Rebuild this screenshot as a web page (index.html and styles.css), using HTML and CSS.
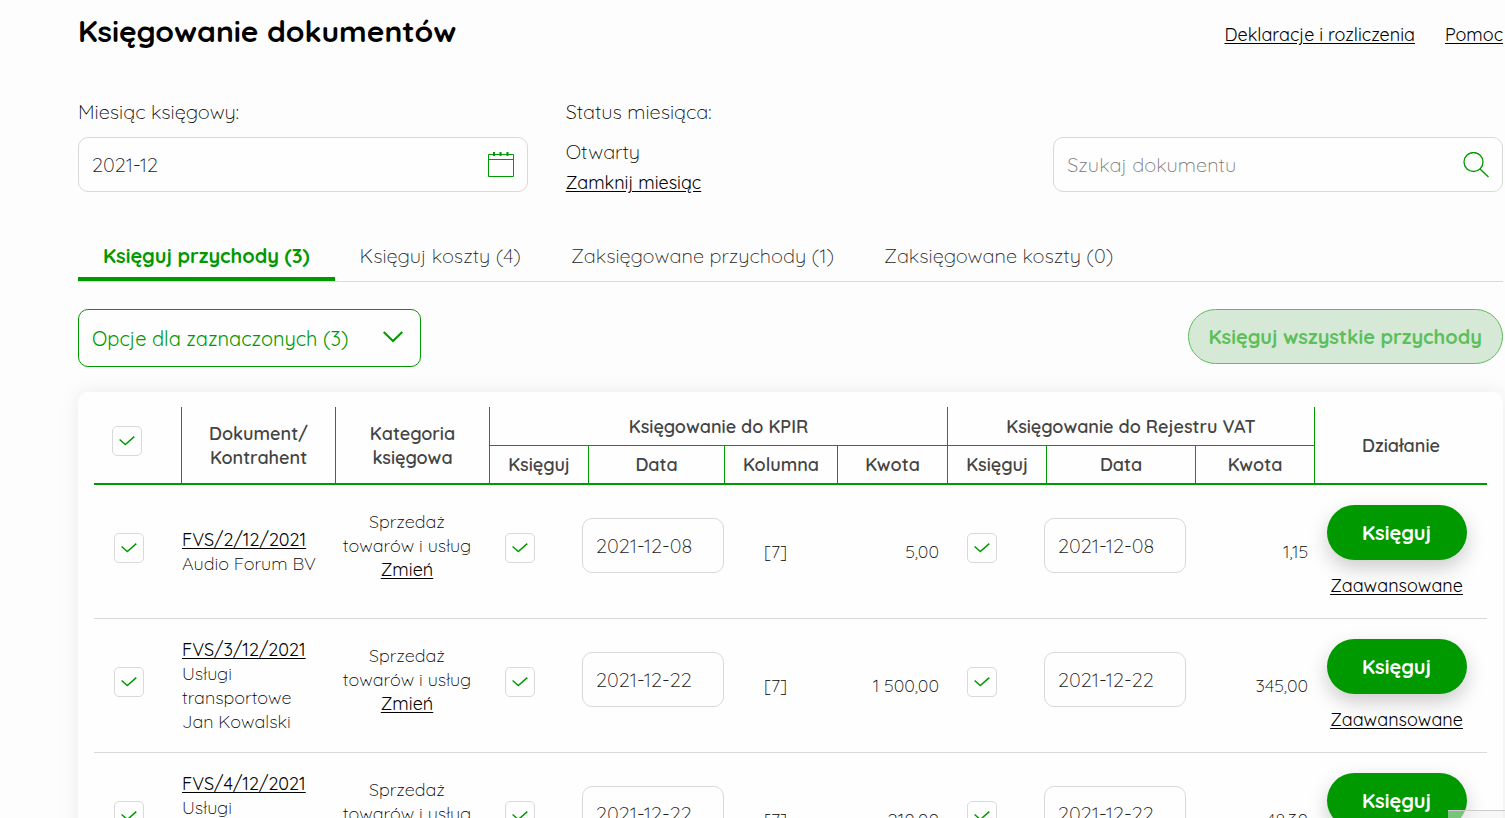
FILE: index.html
```html
<!DOCTYPE html>
<html lang="pl">
<head>
    <meta charset="UTF-8">
    <meta name="viewport" content="width=device-width, initial-scale=1.0">
    <title>Księgowanie dokumentów</title>
    <link rel="stylesheet" href="styles.css">
</head>
<body>
    <main class="page">
        <header class="page-header">
            <h1>Księgowanie dokumentów</h1>
            <nav class="top-links">
                <a href="#">Deklaracje i rozliczenia</a>
                <a href="#">Pomoc</a>
            </nav>
        </header>

        <section class="filters">
            <div class="filter">
                <label for="month">Miesiąc księgowy:</label>
                <div class="field">
                    <input type="text" id="month" name="month" value="2021-12">
                    <svg class="field-icon" viewBox="0 0 26 26" width="26" height="26" fill="none" stroke="#090">
                        <path d="M.5 2.5h25v22H.5zM.5 7.5h25"/>
                        <path d="M6 0v4M12.500 0v4M19.500 0v4" stroke-width="2"/>
                    </svg>
                </div>
            </div>
            <div class="filter">
                <span>Status miesiąca:</span>
                <div class="status">
                    <span>Otwarty</span>
                    <a href="#">Zamknij miesiąc</a>
                </div>
            </div>
            <div class="filter filter-search">
                <div class="field">
                    <input type="text" name="search" placeholder="Szukaj dokumentu" aria-label="Szukaj dokumentu">
                    <svg class="field-icon" viewBox="0 0 26 26" width="26" height="26" fill="none" stroke="#090">
                        <circle cx="10.500" cy="10" r="9.500" stroke-width="1.300"/>
                        <path d="M17 17l8.500 8" stroke-width="1.300"/>
                    </svg>
                </div>
            </div>
        </section>

        <nav class="tabs">
            <a href="#" class="tab active">Księguj przychody (3)</a>
            <a href="#" class="tab">Księguj koszty (4)</a>
            <a href="#" class="tab">Zaksięgowane przychody (1)</a>
            <a href="#" class="tab">Zaksięgowane koszty (0)</a>
        </nav>

        <div class="actions">
            <div class="select-box">
                <select name="options" aria-label="Opcje dla zaznaczonych">
                    <option>Opcje dla zaznaczonych (3)</option>
                </select>
                <svg class="select-arrow" viewBox="0 0 20 12" width="20" height="12" fill="none" stroke="#090" stroke-width="2">
                    <path d="M.7 1l9.300 9 9.300-9"/>
                </svg>
            </div>
            <button class="book-all" disabled>Księguj wszystkie przychody</button>
        </div>

        <div class="card">
            <table class="documents">
                <colgroup>
                    <col class="col-check">
                    <col class="col-document">
                    <col class="col-category">
                    <col class="col-book">
                    <col class="col-kpir-date">
                    <col class="col-column">
                    <col class="col-kpir-amount">
                    <col class="col-book">
                    <col class="col-vat-date">
                    <col class="col-vat-amount">
                    <col class="col-action">
                </colgroup>
                <thead>
                    <tr>
                        <th rowspan="2" class="check-all"><input type="checkbox" aria-label="Zaznacz wszystkie" checked></th>
                        <th rowspan="2">Dokument/<br>Kontrahent</th>
                        <th rowspan="2">Kategoria<br>księgowa</th>
                        <th colspan="4" class="group">Księgowanie do KPIR</th>
                        <th colspan="3" class="group">Księgowanie do Rejestru VAT</th>
                        <th rowspan="2">Działanie</th>
                    </tr>
                    <tr>
                        <th class="sub">Księguj</th>
                        <th class="sub">Data</th>
                        <th class="sub">Kolumna</th>
                        <th class="sub">Kwota</th>
                        <th class="sub">Księguj</th>
                        <th class="sub">Data</th>
                        <th class="sub">Kwota</th>
                    </tr>
                </thead>
                <tbody>
                    <tr>
                        <td class="select-row"><input type="checkbox" aria-label="Zaznacz FVS/2/12/2021" checked></td>
                        <td class="document"><a href="#">FVS/2/12/2021</a><br>Audio Forum BV</td>
                        <td class="category">Sprzedaż<br>towarów i usług<br><a href="#">Zmień</a></td>
                        <td class="book"><input type="checkbox" aria-label="Księguj do KPIR" checked></td>
                        <td class="date"><input type="text" aria-label="Data KPIR" value="2021-12-08"></td>
                        <td class="column">[7]</td>
                        <td class="amount">5,00</td>
                        <td class="book vat"><input type="checkbox" aria-label="Księguj do VAT" checked></td>
                        <td class="date vat"><input type="text" aria-label="Data VAT" value="2021-12-08"></td>
                        <td class="amount vat">1,15</td>
                        <td class="action"><button>Księguj</button><a href="#">Zaawansowane</a></td>
                    </tr>
                    <tr>
                        <td class="select-row"><input type="checkbox" aria-label="Zaznacz FVS/3/12/2021" checked></td>
                        <td class="document"><a href="#">FVS/3/12/2021</a><br>Usługi<br>transportowe<br>Jan Kowalski</td>
                        <td class="category">Sprzedaż<br>towarów i usług<br><a href="#">Zmień</a></td>
                        <td class="book"><input type="checkbox" aria-label="Księguj do KPIR" checked></td>
                        <td class="date"><input type="text" aria-label="Data KPIR" value="2021-12-22"></td>
                        <td class="column">[7]</td>
                        <td class="amount">1 500,00</td>
                        <td class="book vat"><input type="checkbox" aria-label="Księguj do VAT" checked></td>
                        <td class="date vat"><input type="text" aria-label="Data VAT" value="2021-12-22"></td>
                        <td class="amount vat">345,00</td>
                        <td class="action"><button>Księguj</button><a href="#">Zaawansowane</a></td>
                    </tr>
                    <tr>
                        <td class="select-row"><input type="checkbox" aria-label="Zaznacz FVS/4/12/2021" checked></td>
                        <td class="document"><a href="#">FVS/4/12/2021</a><br>Usługi<br>transportowe<br>Jan Kowalski</td>
                        <td class="category">Sprzedaż<br>towarów i usług<br><a href="#">Zmień</a></td>
                        <td class="book"><input type="checkbox" aria-label="Księguj do KPIR" checked></td>
                        <td class="date"><input type="text" aria-label="Data KPIR" value="2021-12-22"></td>
                        <td class="column">[7]</td>
                        <td class="amount">210,00</td>
                        <td class="book vat"><input type="checkbox" aria-label="Księguj do VAT" checked></td>
                        <td class="date vat"><input type="text" aria-label="Data VAT" value="2021-12-22"></td>
                        <td class="amount vat">48,30</td>
                        <td class="action"><button>Księguj</button><a href="#">Zaawansowane</a></td>
                    </tr>
                </tbody>
            </table>
        </div>
    </main>
    <div class="corner-panel"></div>
</body>
</html>
```
FILE: styles.css
```css
* {
    margin: 0;
    padding: 0;
    box-sizing: border-box;
    font-family: Quicksand, Lato, sans-serif;
}

body {
    background: #fdfdfd;
    color: #000;
    font-size: 20px;
    font-weight: 300;
    line-height: 24px;
}

a {
    color: #000;
    font-weight: 400;
    font-size: 18px;
    text-underline-offset: 2px;
}

input, select, button {
    font-size: 20px;
    font-weight: 300;
}

.page {
    padding: 10px 2px 40px 78px;
}

.page-header {
    display: flex;
    justify-content: space-between;
    align-items: center;
    height: 42px;
}

h1 {
    color: #000;
    font-size: 30px;
    font-weight: 700;
    line-height: 40px;
}

.top-links {
    display: flex;
    gap: 30px;
    padding-top: 8px;
}

.filters {
    display: grid;
    grid-template-columns: repeat(3, 1fr);
    gap: 38px;
    margin-top: 48px;
}

.filter {
    display: flex;
    flex-direction: column;
    gap: 13px;
}

.filter-search {
    justify-content: flex-end;
}

.field {
    display: flex;
    align-items: center;
    height: 55px;
    padding: 0 13px;
    border: 1px solid #d9d9d9;
    border-radius: 10px;
    background: #fefefe;
}

.field input {
    flex: 1;
    min-width: 0;
    border: none;
    outline: none;
    background: none;
    color: #222;
}

.field input::placeholder {
    color: #777;
    opacity: 1;
}

.status {
    display: flex;
    flex-direction: column;
    align-items: flex-start;
    gap: 7px;
    height: 55px;
    padding-top: 3px;
}

.tabs {
    display: flex;
    margin-top: 40px;
    border-bottom: 1px solid #d9d9d9;
}

.tab {
    padding: 12px 25px 9px;
    border-bottom: 4px solid transparent;
    color: #222;
    font-size: 20px;
    font-weight: 300;
    text-decoration: none;
}

.tab.active {
    border-color: #090;
    color: #090;
    font-weight: 700;
}

.actions {
    display: flex;
    justify-content: space-between;
    align-items: flex-start;
    margin-top: 27px;
}

.select-box {
    position: relative;
}

.select-box select {
    width: 343px;
    height: 58px;
    padding: 0 50px 0 13px;
    border: 1px solid #090;
    border-radius: 10px;
    background: #fefefe;
    color: #090;
    font-weight: 400;
    appearance: none;
}

.select-arrow {
    position: absolute;
    right: 18px;
    top: 22px;
    pointer-events: none;
}

.book-all {
    height: 55px;
    padding: 0 20px;
    border: 1px solid #5cbf5c;
    border-radius: 28px;
    background: #d5e9d6;
    color: #5cbf5c;
    font-weight: 700;
}

.card {
    margin-top: 25px;
    padding: 15px 16px;
    border-radius: 10px;
    background: #fefefe;
    box-shadow: 0 0 20px rgba(0, 0, 0, 0.08);
}

.documents {
    width: 100%;
    table-layout: fixed;
    border-collapse: separate;
    border-spacing: 0;
    font-size: 18px;
}

.col-check { width: 87px; }
.col-document, .col-category { width: 154px; }
.col-book { width: 99px; }
.col-kpir-date { width: 136px; }
.col-column { width: 113px; }
.col-kpir-amount { width: 110px; }
.col-vat-date { width: 149px; }
.col-vat-amount { width: 119px; }
.col-action { width: 173px; }

th {
    padding-top: 2px;
    border-left: 1px solid #090;
    border-bottom: 2px solid #090;
    color: #444;
    font-weight: 600;
}

th.check-all {
    padding: 0 22px 8px 0;
    border-left: none;
}

th.group {
    height: 39px;
    border-bottom-width: 1px;
}

th.sub {
    height: 39px;
    padding-top: 0;
}

td {
    height: 134px;
    border-bottom: 1px solid #d9d9d9;
    vertical-align: middle;
}

input[type="checkbox"] {
    display: inline-block;
    width: 30px;
    height: 30px;
    border: 1px solid #d9d9d9;
    border-radius: 5px;
    background: #fefefe url("data:image/svg+xml,%3Csvg xmlns='http://www.w3.org/2000/svg' width='16' height='10' fill='none' stroke='%23090' stroke-width='1.500'%3E%3Cpath d='M.6 3.500L6.300 8.500 15.300.6'/%3E%3C/svg%3E") center no-repeat;
    vertical-align: middle;
    appearance: none;
}

.select-row {
    padding: 0 0 8px 20px;
}

.document {
    white-space: nowrap;
    padding-left: 1px;
}

.category {
    padding: 0 10px 12px 0;
    text-align: center;
}

.book {
    padding: 0 0 8px 16px;
}

.book.vat {
    padding-left: 20px;
}

.date {
    padding-bottom: 12px;
}

/* the date boxes are a little wider than their column */
.date input {
    width: 142px;
    height: 55px;
    margin: 0 -6px;
    padding: 0 13px;
    border: 1px solid #d9d9d9;
    border-radius: 10px;
    background: #fefefe;
    color: #222;
    vertical-align: middle;
}

.date.vat input {
    margin: 0 -2px;
}

.column {
    padding-right: 10px;
    text-align: center;
}

.amount {
    padding-right: 8px;
    text-align: right;
}

.amount.vat {
    padding-right: 6px;
}

.action {
    padding-right: 8px;
    text-align: center;
}

.action button {
    display: block;
    width: 140px;
    height: 55px;
    margin: 0 auto 14px;
    border: none;
    border-radius: 28px;
    background: #090;
    box-shadow: 0 8px 20px rgba(0, 0, 0, 0.2);
    color: #fff;
    font-weight: 700;
}

.corner-panel {
    position: fixed;
    right: 0;
    bottom: 0;
    width: 57px;
    height: 8px;
    border-top: 1px solid #ccc;
    background: rgba(240, 240, 240, 0.5);
}
```
